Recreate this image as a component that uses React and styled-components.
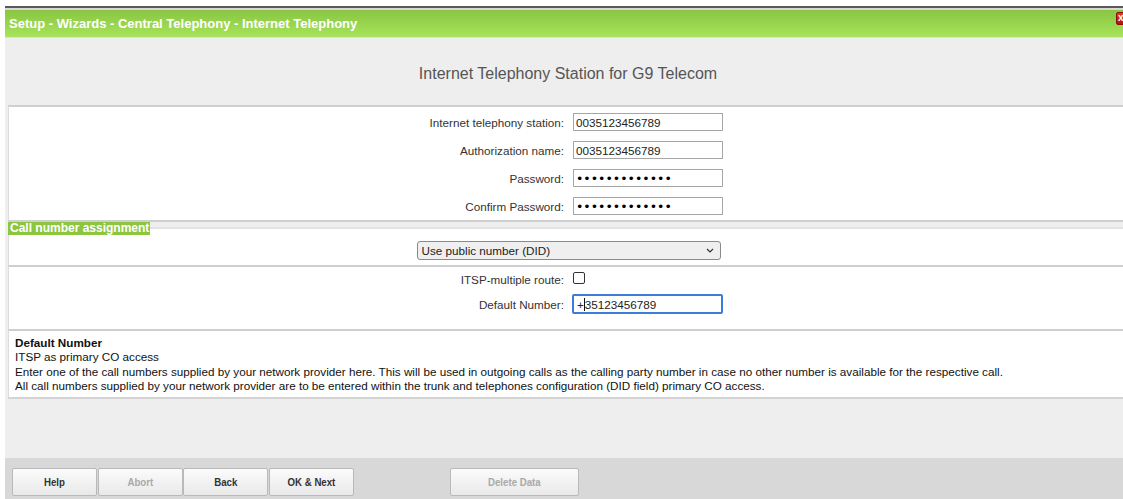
import React from 'react';
import styled, { createGlobalStyle } from 'styled-components';

const GlobalStyle = createGlobalStyle`
  html, body {
    margin: 0;
    padding: 0;
    background: #fff;
    overflow: hidden;
  }
  body {
    font-family: "Liberation Sans", Arial, sans-serif;
    font-size: 11.7px;
    color: #222;
  }
`;

const Page = styled.div`
  width: 1123px;
  height: 499px;
  display: flex;
  flex-direction: column;
  overflow: hidden;
`;

const TopStrip = styled.div`
  height: 6px;
  margin-left: 5px;
  border-bottom: 2px solid #5a5a5a;
  box-shadow: 0 2px 0 #d8d8d8;
  margin-bottom: 2px;
`;

const Window = styled.div`
  flex: 1;
  display: flex;
  flex-direction: column;
  margin-left: 5px;
  min-height: 0;
`;

const TitleBar = styled.div`
  height: 27px;
  flex: none;
  display: flex;
  align-items: center;
  justify-content: space-between;
  padding-left: 4px;
  background: linear-gradient(#89c541, #a7e45b);
  color: #fff;
  font-weight: bold;
  font-size: 13px;
  border-bottom: 1px solid #d6e9c4;
`;

const CloseBox = styled.div`
  align-self: flex-start;
  margin-top: 2px;
  margin-right: -9px;
  width: 13px;
  height: 11px;
  background: linear-gradient(#e43a2c, #b3130a);
  border: 1px solid #8c0b04;
  border-radius: 2px;
  color: #fff;
  font-size: 10px;
  font-weight: bold;
  line-height: 10px;
  padding-left: 1px;
`;

const Body = styled.div`
  flex: 1;
  background: #eeeeee;
  display: flex;
  flex-direction: column;
  min-height: 0;
`;

const Heading = styled.h1`
  margin: 0;
  height: 63px;
  display: flex;
  align-items: center;
  justify-content: center;
  font-size: 16px;
  font-weight: normal;
  color: #555;
  padding: 4px 0 0 8px;
`;

const Panel = styled.div`
  margin-left: 3px;
  background: #fff;
  border-top: 2px solid #cfcfcf;
  border-left: 1px solid #dcdcdc;
  padding: ${({ pad }) => pad || '0'};
`;

const FormGrid = styled.div`
  display: grid;
  grid-template-columns: 555px 1fr;
  column-gap: 9px;
  row-gap: ${({ gap }) => gap || '10px'};
  align-items: center;
`;

const Label = styled.label`
  text-align: right;
  color: #333;
`;

const TextInput = styled.input`
  box-sizing: border-box;
  width: 150px;
  height: 18px;
  margin: 0;
  padding: 0 2px;
  border: 1px solid #a6a6a6;
  font-family: "Liberation Sans", Arial, sans-serif;
  font-size: 11.7px;
  color: #222;
  outline: none;

  &[type='password'] {
    font-family: "DejaVu Sans", sans-serif;
    font-size: 12.5px;
    color: #000;
  }
`;

const FocusedField = styled.div`
  box-sizing: border-box;
  width: 151px;
  height: 20px;
  margin-left: -1px;
  padding: 0 3px;
  display: flex;
  align-items: center;
  border: 2px solid #3c7dd8;
  border-radius: 2px;
  color: #222;
`;

const Caret = styled.span`
  display: inline-block;
  width: 1px;
  height: 13px;
  background: #111;
`;

const Check = styled.input.attrs({ type: 'checkbox' })`
  appearance: none;
  margin: 0;
  width: 12px;
  height: 12px;
  border: 1px solid #333;
  border-radius: 2px;
  background: #fff;
`;

const LegendRow = styled.div`
  display: flex;
  align-items: flex-start;
  margin-left: 3px;
  height: 13px;
`;

const Legend = styled.span`
  background: #8cc63e;
  color: #fff;
  font-weight: bold;
  font-size: 12px;
  line-height: 13px;
  padding: 0 1px 0 2px;
`;

const LegendRule = styled.span`
  flex: 1;
  height: 6px;
  margin-top: 5px;
  border-top: 2px solid #e2e2e2;
  background: #fff;
`;

const SelectPanel = styled.div`
  margin-left: 3px;
  background: #fff;
  border-left: 1px solid #dcdcdc;
  height: 30px;
  display: flex;
  align-items: center;
  justify-content: center;
`;

const SelectWrap = styled.div`
  position: relative;
  margin-left: 5px;
  display: flex;
`;

const Select = styled.select`
  appearance: none;
  width: 304px;
  height: 19px;
  margin: 0;
  padding: 0 4px;
  border: 1px solid #8a8a8a;
  border-radius: 3px;
  background: #efefef;
  font-family: "Liberation Sans", Arial, sans-serif;
  font-size: 11.7px;
  color: #222;
`;

const Chevron = styled.svg`
  position: absolute;
  right: 7px;
  top: 7px;
  pointer-events: none;
`;

const Help = styled.div`
  margin-left: 3px;
  background: #fff;
  border-top: 2px solid #cfcfcf;
  border-left: 1px solid #dcdcdc;
  border-bottom: 2px solid #d4d4d4;
  padding: 5px 6px 3px;
  line-height: 14.4px;
  color: #111;
`;

const HelpTitle = styled.div`
  font-weight: bold;
`;

const Spacer = styled.div`
  flex: 1;
`;

const ButtonBar = styled.div`
  height: 41px;
  flex: none;
  background: #d8d8d8;
  display: flex;
  align-items: flex-start;
  padding: 10px 0 0 7px;
  box-sizing: border-box;
`;

const Button = styled.button`
  box-sizing: border-box;
  width: ${({ wide }) => (wide ? '129px' : '85px')};
  height: 28px;
  margin: 0 ${({ gapAfter }) => gapAfter || '0.5px'} 0 0;
  padding: 0;
  border: 1px solid #b9b9b9;
  border-radius: 2px;
  background: linear-gradient(#fbfbfb, #e9e9e9);
  font-family: "Liberation Sans", Arial, sans-serif;
  font-weight: bold;
  font-size: 11.5px;
  color: ${({ disabled }) => (disabled ? '#a9a9a9' : '#333')};
`;

// narrow caption face for the wizard buttons
const Caption = styled.span`
  display: inline-block;
  transform: scaleX(0.84);
`;

export default function App() {
  return (
    <Page>
      <GlobalStyle />
      <TopStrip />
      <Window>
        <TitleBar>
          <span>Setup - Wizards - Central Telephony - Internet Telephony</span>
          <CloseBox>x</CloseBox>
        </TitleBar>
        <Body>
          <Heading>Internet Telephony Station for G9 Telecom</Heading>

          <Panel pad="6px 0 5px">
            <FormGrid>
              <Label>Internet telephony station:</Label>
              <div><TextInput defaultValue="0035123456789" /></div>
              <Label>Authorization name:</Label>
              <div><TextInput defaultValue="0035123456789" /></div>
              <Label>Password:</Label>
              <div><TextInput type="password" defaultValue="0035123456789" /></div>
              <Label>Confirm Password:</Label>
              <div><TextInput type="password" defaultValue="0035123456789" /></div>
            </FormGrid>
          </Panel>

          <Panel />
          <LegendRow>
            <Legend>Call number assignment</Legend>
            <LegendRule />
          </LegendRow>
          <SelectPanel>
            <SelectWrap>
              <Select defaultValue="did">
                <option value="did">Use public number (DID)</option>
              </Select>
              <Chevron width="8" height="5" viewBox="0 0 8 5">
                <path d="M1 1l3 3 3-3" fill="none" stroke="#333" strokeWidth="1.2" />
              </Chevron>
            </SelectWrap>
          </SelectPanel>

          <Panel pad="5px 0 15px">
            <FormGrid gap="8px">
              <Label>ITSP-multiple route:</Label>
              <div><Check /></div>
              <Label>Default Number:</Label>
              <div>
                <FocusedField>+<Caret />35123456789</FocusedField>
              </div>
            </FormGrid>
          </Panel>

          <Help>
            <HelpTitle>Default Number</HelpTitle>
            <div>ITSP as primary CO access</div>
            <div>
              Enter one of the call numbers supplied by your network provider here. This will be used in outgoing calls as the calling party number in case no other number is available for the respective call.
            </div>
            <div>
              All call numbers supplied by your network provider are to be entered within the trunk and telephones configuration (DID field) primary CO access.
            </div>
          </Help>

          <Spacer />

          <ButtonBar>
            <Button><Caption>Help</Caption></Button>
            <Button disabled><Caption>Abort</Caption></Button>
            <Button><Caption>Back</Caption></Button>
            <Button gapAfter="96px"><Caption>OK &amp; Next</Caption></Button>
            <Button wide disabled><Caption>Delete Data</Caption></Button>
          </ButtonBar>
        </Body>
      </Window>
    </Page>
  );
}
